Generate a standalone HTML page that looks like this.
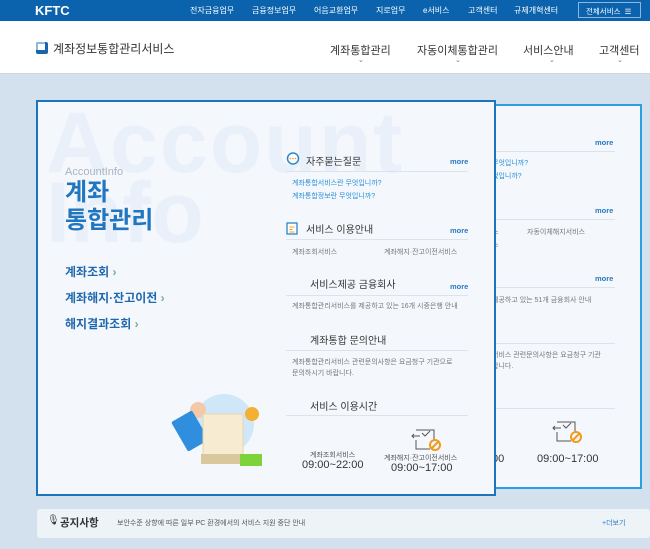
<!DOCTYPE html>
<html><head><meta charset="utf-8"><style>
*{margin:0;padding:0;box-sizing:border-box}
body{width:650px;height:549px;overflow:hidden;position:relative;font-family:"Liberation Sans","Noto Sans CJK KR",sans-serif;background:#d3e0ed}
.a{position:absolute;white-space:nowrap}
.top{left:0;top:0;width:650px;height:21px;background:#0b63ae}
.tm{color:#fff;font-size:8px;top:5px}
.hdr{left:0;top:21px;width:650px;height:53px;background:#fff;border-bottom:1px solid #cdd5dd}
.nv{font-size:11px;color:#333;top:42px}
.car{font-size:7px;color:#678;top:56px}
.card{left:36px;top:100px;width:460px;height:396px;background:#f4f8fd;border:2px solid #1c74ba;overflow:hidden}
.back{left:478px;top:104px;width:164px;height:385px;background:#f4f8fd;border:2px solid #2b9fe2}
.h{font-size:10px;color:#333}
.more{font-size:7.5px;color:#2a78c0;font-weight:bold}
.ln{height:1px;background:#dde3ea}
.lk{font-size:7px;color:#2a90d8}
.sm{font-size:7px;color:#777}
</style></head><body>
<div class="a top"></div>
<div class="a" style="left:35px;top:3px;color:#fff;font-weight:bold;font-size:13px">KFTC</div>
<div class="a tm" style="left:190px">전자금융업무</div>
<div class="a tm" style="left:252px">금융정보업무</div>
<div class="a tm" style="left:314px">어음교환업무</div>
<div class="a tm" style="left:376px">지로업무</div>
<div class="a tm" style="left:423px">e서비스</div>
<div class="a tm" style="left:468px">고객센터</div>
<div class="a tm" style="left:514px">규제개혁센터</div>
<div class="a" style="left:578px;top:2px;width:63px;height:16px;border:1px solid #8cb6df;color:#fff;font-size:7.5px;padding:3px 0 0 7px">전체서비스 &nbsp;☰</div>
<div class="a hdr"></div>
<div class="a" style="left:36px;top:42px;width:12px;height:12px;background:#1a64ad;border-radius:2px"></div>
<div class="a" style="left:36px;top:42px;width:9px;height:8px;background:#8fb8e0;border-radius:2px 0 0 0"></div>
<div class="a" style="left:38px;top:44px;width:7px;height:6px;background:#fff"></div>
<div class="a" style="left:53px;top:40px;font-size:12px;color:#333">계좌정보통합관리서비스</div>
<div class="a nv" style="left:330px">계좌통합관리</div><div class="a car" style="left:358px">⌄</div>
<div class="a nv" style="left:417px">자동이체통합관리</div><div class="a car" style="left:455px">⌄</div>
<div class="a nv" style="left:523px">서비스안내</div><div class="a car" style="left:549px">⌄</div>
<div class="a nv" style="left:599px">고객센터</div><div class="a car" style="left:617px">⌄</div>

<div class="a back"></div>
<div class="a more" style="left:595px;top:138px">more</div>
<div class="a ln" style="left:490px;top:151px;width:125px"></div>
<div class="a lk" style="left:492px;top:158px">무엇입니까?</div>
<div class="a lk" style="left:492px;top:171px">었입니까?</div>
<div class="a more" style="left:595px;top:206px">more</div>
<div class="a ln" style="left:490px;top:219px;width:125px"></div>
<div class="a sm" style="left:492px;top:227px">스</div><div class="a sm" style="left:527px;top:227px">자동이체해지서비스</div>
<div class="a sm" style="left:492px;top:240px">스</div>
<div class="a more" style="left:595px;top:274px">more</div>
<div class="a ln" style="left:490px;top:287px;width:125px"></div>
<div class="a sm" style="left:492px;top:295px">제공하고 있는 51개 금융회사 안내</div>
<div class="a ln" style="left:490px;top:343px;width:125px"></div>
<div class="a sm" style="left:492px;top:350px">서비스 관련문의사항은 요금청구 기관</div>
<div class="a sm" style="left:492px;top:361px">랍니다.</div>
<div class="a ln" style="left:490px;top:408px;width:125px"></div>
<div class="a" style="left:492px;top:453px;font-size:11px;color:#333">00</div>
<div class="a" style="left:537px;top:453px;font-size:11px;color:#333">09:00~17:00</div>
<svg class="a" style="left:549px;top:418px" width="34" height="26"><path d="M8 4h18v10M8 14v9h14M4 10h8M6 8l-2 2 2 2M14 7l3 3 5-5" stroke="#555" fill="none"/><circle cx="27" cy="19" r="5" fill="none" stroke="#f29a1c" stroke-width="2"/><path d="M24 22l6-6" stroke="#f29a1c" stroke-width="2"/></svg>

<div class="a card">
<div class="a" style="left:8px;top:-8px;font-size:86px;font-weight:bold;color:#e9f0f9;letter-spacing:2px">Account</div>
<div class="a" style="left:8px;top:62px;font-size:86px;font-weight:bold;color:#e9f0f9">Info</div>
<div class="a" style="left:27px;top:64px;font-size:11px;color:#a9b4c0">AccountInfo</div>
<div class="a" style="left:27px;top:77px;font-size:24px;font-weight:bold;color:#2276bf;line-height:28px">계좌<br>통합관리</div>
<div class="a" style="left:27px;top:161px;font-size:12px;font-weight:bold;color:#1f68ad">계좌조회 <span style="color:#7a9">›</span></div>
<div class="a" style="left:27px;top:187px;font-size:12px;font-weight:bold;color:#1f68ad">계좌해지·잔고이전 <span style="color:#7a9">›</span></div>
<div class="a" style="left:27px;top:213px;font-size:12px;font-weight:bold;color:#1f68ad">해지결과조회 <span style="color:#7a9">›</span></div>

<svg class="a" style="left:248px;top:50px" width="14" height="14"><circle cx="7" cy="6.5" r="5.5" fill="#fff" stroke="#2a86cc" stroke-width="1.5"/><circle cx="4.5" cy="6.5" r=".8" fill="#f0a020"/><circle cx="7" cy="6.5" r=".8" fill="#f0a020"/><circle cx="9.5" cy="6.5" r=".8" fill="#f0a020"/></svg>
<div class="a h" style="left:268px;top:51px">자주묻는질문</div>
<div class="a more" style="left:412px;top:55px">more</div>
<div class="a ln" style="left:248px;top:69px;width:182px"></div>
<div class="a lk" style="left:254px;top:76px">계좌통합서비스란 무엇입니까?</div>
<div class="a lk" style="left:254px;top:89px">계좌통합정보란 무엇입니까?</div>
<svg class="a" style="left:248px;top:119px" width="12" height="14"><rect x="1" y="2" width="10" height="11" fill="#fff" stroke="#2a86cc" stroke-width="1.3"/><path d="M3.5 6h5M3.5 8.5h3M3.5 11h5" stroke="#f0a020"/></svg>
<div class="a h" style="left:268px;top:119px">서비스 이용안내</div>
<div class="a more" style="left:412px;top:124px">more</div>
<div class="a ln" style="left:248px;top:137px;width:182px"></div>
<div class="a sm" style="left:254px;top:145px">계좌조회서비스</div>
<div class="a sm" style="left:346px;top:145px">계좌해지·잔고이전서비스</div>
<div class="a h" style="left:272px;top:174px">서비스제공 금융회사</div>
<div class="a more" style="left:412px;top:180px">more</div>
<div class="a ln" style="left:248px;top:193px;width:182px"></div>
<div class="a sm" style="left:254px;top:199px">계좌통합관리서비스를 제공하고 있는 16개 시중은행 안내</div>
<div class="a h" style="left:272px;top:230px">계좌통합 문의안내</div>
<div class="a ln" style="left:248px;top:248px;width:182px"></div>
<div class="a sm" style="left:254px;top:255px">계좌통합관리서비스 관련문의사항은 요금청구 기관으로</div>
<div class="a sm" style="left:254px;top:266px">문의하시기 바랍니다.</div>
<div class="a h" style="left:272px;top:296px">서비스 이용시간</div>
<div class="a ln" style="left:248px;top:313px;width:182px"></div>
<svg class="a" style="left:370px;top:324px" width="34" height="26"><path d="M8 4h18v10M8 14v9h14M4 10h8M6 8l-2 2 2 2M14 7l3 3 5-5" stroke="#555" fill="none"/><circle cx="27" cy="19" r="5" fill="none" stroke="#f29a1c" stroke-width="2"/><path d="M24 22l6-6" stroke="#f29a1c" stroke-width="2"/></svg>
<div class="a sm" style="left:272px;top:348px;color:#555">계좌조회서비스</div>
<div class="a" style="left:264px;top:357px;font-size:11px;color:#333">09:00~22:00</div>
<div class="a sm" style="left:346px;top:351px;color:#555">계좌해지·잔고이전서비스</div>
<div class="a" style="left:353px;top:360px;font-size:11px;color:#333">09:00~17:00</div>

<svg class="a" style="left:118px;top:290px" width="120" height="80">
<circle cx="68" cy="32" r="30" fill="#cfe7f8"/>
<circle cx="42" cy="18" r="8" fill="#f3c9a8"/>
<rect x="22" y="22" width="24" height="34" rx="2" fill="#2f8fde" transform="rotate(-30 34 39)"/>
<rect x="47" y="22" width="40" height="46" fill="#f7ecd2" stroke="#e6d6b0"/>
<rect x="45" y="62" width="44" height="10" fill="#d9c79e"/>
<circle cx="96" cy="22" r="7" fill="#f4b032"/>
<rect x="84" y="62" width="22" height="12" fill="#7ed33a"/>
</svg>
</div>

<div class="a" style="left:37px;top:509px;width:613px;height:29px;background:#eef3f8;border-radius:3px"></div>
<div class="a" style="left:47px;top:515px;font-size:10px;color:#333">🎙</div>
<div class="a" style="left:60px;top:515px;font-size:10.5px;color:#333;font-weight:bold">공지사항</div>
<div class="a" style="left:117px;top:518px;font-size:7px;color:#555">보안수준 상향에 따른 일부 PC 환경에서의 서비스 지원 중단 안내</div>
<div class="a" style="left:602px;top:518px;font-size:7px;color:#2a78c0">+더보기</div>
</body></html>
